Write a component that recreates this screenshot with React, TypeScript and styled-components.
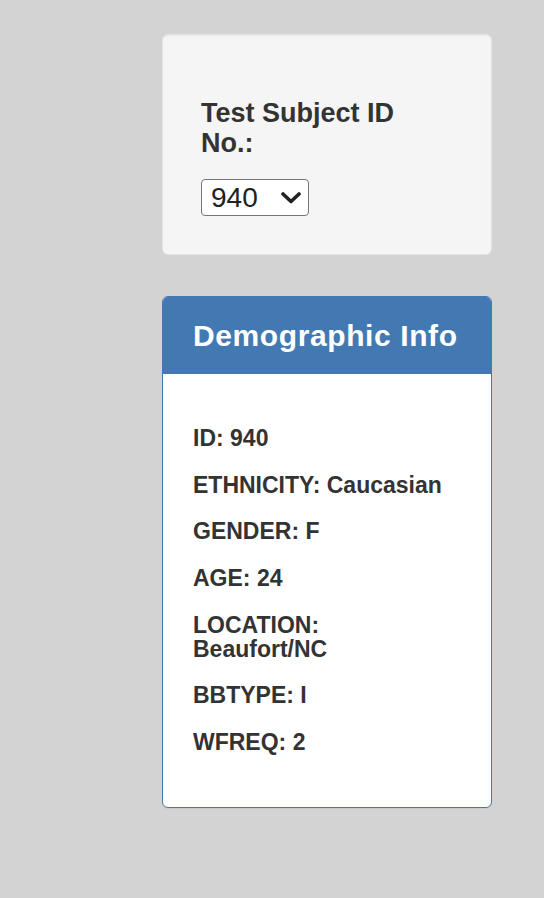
import React, { useState } from "react";
import styled, { createGlobalStyle } from "styled-components";

const GlobalStyle = createGlobalStyle`
  html, body {
    margin: 0;
    padding: 0;
    background: #d3d3d3;
  }
  body {
    font-family: "Liberation Sans", Arial, Helvetica, sans-serif;
    color: #333;
  }
`;

type Demo = {
  label: string;
  value: string | number;
};

const subjects = [940, 941, 943, 944, 945, 946, 947, 948];

const demographics: Demo[] = [
  { label: "ID", value: 940 },
  { label: "ETHNICITY", value: "Caucasian" },
  { label: "GENDER", value: "F" },
  { label: "AGE", value: 24 },
  { label: "LOCATION", value: "Beaufort/NC" },
  { label: "BBTYPE", value: "I" },
  { label: "WFREQ", value: 2 },
];

const App = () => {
  const [subject, setSubject] = useState("940");

  return (
    <>
      <GlobalStyle />
      <Page>
        <Column>
          <Well>
            <Label htmlFor="selDataset">Test Subject ID No.:</Label>
            <SelectWrap>
              <Select
                id="selDataset"
                value={subject}
                onChange={(e) => setSubject(e.target.value)}
              >
                {subjects.map((s) => (
                  <option key={s} value={s}>
                    {s}
                  </option>
                ))}
              </Select>
              <Chevron viewBox="0 0 20 12" aria-hidden="true">
                <path
                  d="M2 2 L10 9.5 L18 2"
                  fill="none"
                  stroke="#222"
                  strokeWidth="3.6"
                  strokeLinecap="round"
                  strokeLinejoin="round"
                />
              </Chevron>
            </SelectWrap>
          </Well>

          <Panel>
            <PanelHeading>
              <PanelTitle>Demographic Info</PanelTitle>
            </PanelHeading>
            <PanelBody>
              {demographics.map((d) => (
                <InfoLine key={d.label}>
                  {d.label}: {d.value}
                </InfoLine>
              ))}
            </PanelBody>
          </Panel>
        </Column>
      </Page>
    </>
  );
};

export default App;

const Page = styled.div`
  padding: 34px 0 40px 162px;
`;

const Column = styled.div`
  width: 330px;
  display: flex;
  flex-direction: column;
  gap: 41px;
`;

const Well = styled.div`
  background-color: #f5f5f5;
  border: 1px solid #e3e3e3;
  border-radius: 6px;
  box-shadow: inset 0 1px 1px rgba(0, 0, 0, 0.05);
  padding: 38px;
  display: flex;
  flex-direction: column;
  align-items: flex-start;
`;

const Label = styled.label`
  display: block;
  margin: 26px 0 21px;
  font-size: 27px;
  font-weight: bold;
  line-height: 1.1;
  color: #333;
`;

const SelectWrap = styled.div`
  position: relative;
  display: inline-block;
`;

const Select = styled.select`
  appearance: none;
  -webkit-appearance: none;
  width: 108px;
  height: 37px;
  box-sizing: border-box;
  padding: 0 0 0 9px;
  border: 1px solid #767676;
  border-radius: 4px;
  background: #fff;
  font-family: "Liberation Sans", Arial, sans-serif;
  font-size: 28px;
  color: #222;
  cursor: pointer;
`;

const Chevron = styled.svg`
  position: absolute;
  right: 8px;
  top: 13px;
  width: 20px;
  height: 12px;
  pointer-events: none;
`;

const Panel = styled.div`
  background: #fff;
  border: 1px solid #4379b3;
  border-radius: 6px;
  box-shadow: 0 1px 1px rgba(0, 0, 0, 0.05);
  overflow: hidden;
`;

const PanelHeading = styled.div`
  background-color: #4379b3;
  padding: 22px 30px 22px;
`;

const PanelTitle = styled.h3`
  margin: 0;
  font-size: 30px;
  font-weight: bold;
  line-height: 1.1;
  letter-spacing: 0.6px;
  color: #fff;
`;

const PanelBody = styled.div`
  padding: 28.5px 45px 30px 30px;
  display: flex;
  flex-direction: column;
  gap: 22.7px;
`;

const InfoLine = styled.h5`
  margin: 23px 0;
  font-size: 23px;
  font-weight: bold;
  line-height: 24px;
  color: #333;
  & + & {
    margin-top: 0;
  }
  &:not(:last-child) {
    margin-bottom: 0;
  }
`;
